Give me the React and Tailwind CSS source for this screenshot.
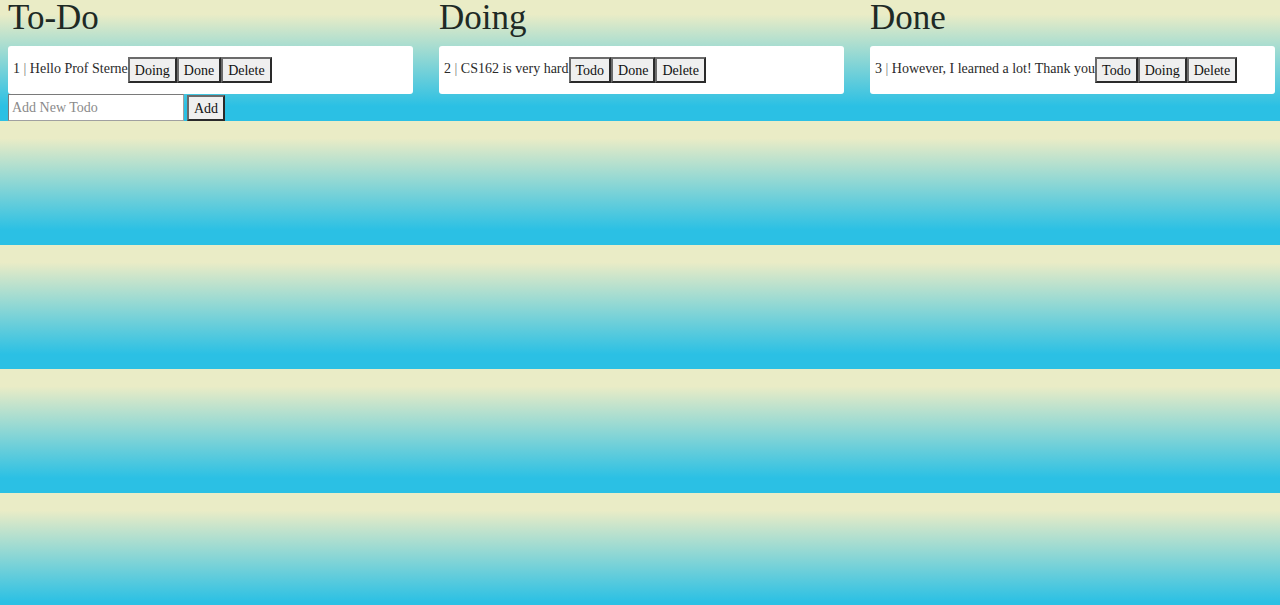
import React from 'react';

const columns = [
  {
    title: 'To-Do',
    items: [{ id: 1, text: 'Hello Prof Sterne', actions: ['Doing', 'Done', 'Delete'] }],
    canAdd: true,
  },
  {
    title: 'Doing',
    items: [{ id: 2, text: 'CS162 is very hard', actions: ['Todo', 'Done', 'Delete'] }],
  },
  {
    title: 'Done',
    items: [{ id: 3, text: 'However, I learned a lot! Thank you', actions: ['Todo', 'Doing', 'Delete'] }],
  },
];

const btn =
  'h-[26px] px-[5px] pt-[2px] bg-[#efefef] text-[14px] leading-none text-[#111] border-2 border-t-[#6b6b6b] border-l-[#6b6b6b] border-b-[#2a2a2a] border-r-[#2a2a2a]';

const Item = ({ item }) => (
  <div className="flex items-center h-[48px] px-[5px] bg-white rounded-[3px]">
    <span className="text-[14px] leading-[16px] pb-[3px] text-[#2a2a2a] whitespace-nowrap">
      {item.id} <span className="text-[#777]">|</span> {item.text}
    </span>
    {item.actions.map((a) => (
      <button key={a} type="button" className={btn}>
        {a}
      </button>
    ))}
  </div>
);

export default function App() {
  return (
    <div className="min-h-screen h-[605px] font-['Liberation_Serif',serif] bg-[linear-gradient(#eaecc6_14%,#2bc0e4_88%)] bg-[length:100%_124px] bg-[position:0_-3px] bg-repeat-y">
      <div className="flex pl-2">
        {columns.map((col) => (
          <div key={col.title} className="w-[405px] mr-[26px] shrink-0">
            <h1 className="text-[35px] leading-[35px] text-[#1e2a25]">{col.title}</h1>
            <div className="mt-[11px]">
              {col.items.map((item) => (
                <Item key={item.id} item={item} />
              ))}
            </div>
            {col.canAdd && (
              <div className="flex items-center gap-[3px]">
                <input
                  placeholder="Add New Todo"
                  className="w-[176px] h-[27px] px-[3px] bg-white text-[14px] text-[#222] placeholder:text-[#8a8a8a] border border-t-[#7a7a7a] border-l-[#7a7a7a] border-b-[#a0a0a0] border-r-[#a0a0a0] outline-none"
                />
                <button type="button" className={btn}>
                  Add
                </button>
              </div>
            )}
          </div>
        ))}
      </div>
    </div>
  );
}
